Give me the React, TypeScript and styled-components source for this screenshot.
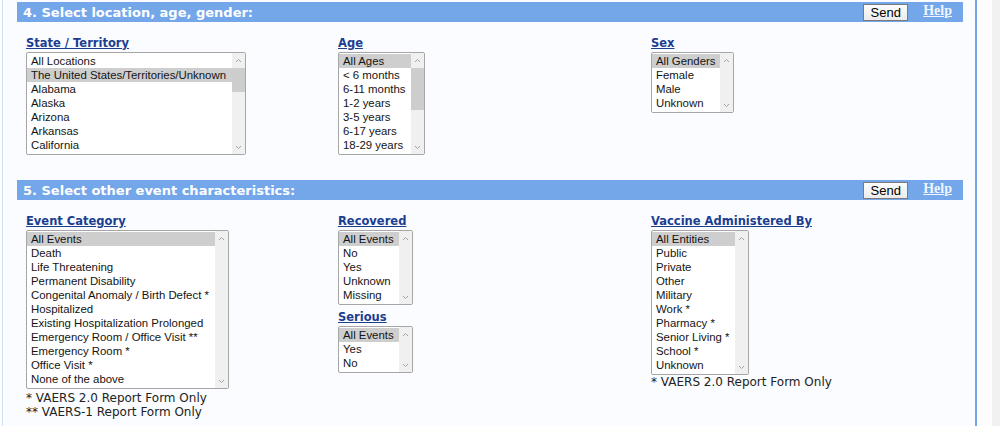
import React from 'react';
import styled, { createGlobalStyle } from 'styled-components';

const GlobalStyle = createGlobalStyle`
  html, body {
    margin: 0;
    padding: 0;
    background: #ffffff;
  }
  body {
    font-family: "Liberation Sans", Arial, sans-serif;
  }
`;

const Page = styled.div`
  display: flex;
  height: 426px;
  overflow: hidden;
`;

const Panel = styled.div`
  margin-left: 2px;
  width: 946px;
  padding: 2px 12px 0 14px;
  border-left: 1px solid #cfe0f7;
  border-right: 2px solid #74a6ea;
  background: #fafcff;
`;

const Gap = styled.div`
  flex: 1;
  background: #fdfdfd;
`;

const Gutter = styled.div`
  width: 8px;
  background: #f1f1f1;
`;

const Section = styled.section`
  & + & {
    margin-top: 25px;
  }
`;

const Bar = styled.div`
  display: flex;
  align-items: center;
  height: 20px;
  padding: 0 11px 0 6px;
  background: #74a6ea;
`;

const BarTitle = styled.h2`
  flex: 1;
  margin: 0;
  font: bold 13px "DejaVu Sans", Verdana, sans-serif;
  color: #ffffff;
`;

const SendButton = styled.button`
  width: 45px;
  height: 17px;
  margin-right: 15px;
  padding: 0;
  font: 13px "Liberation Sans", Arial, sans-serif;
  color: #000;
  background: linear-gradient(#fdfdfd, #ebebeb);
  border: 1px solid #7a7a7a;
  border-radius: 0;
`;

const HelpLink = styled.a`
  margin-top: -3px;
  font: bold 14px "Liberation Serif", Georgia, serif;
  color: #f0f5ff;
  text-decoration: underline;
`;

const Fields = styled.div`
  display: grid;
  grid-template-columns: 312px 313px 1fr;
  align-items: start;
  padding: 13px 0 0 9px;
`;

const Field = styled.div`
  display: flex;
  flex-direction: column;
  align-items: flex-start;
`;

const FieldLabel = styled.a<{ $gap?: number }>`
  display: inline-block;
  height: 16px;
  margin: ${(p) => p.$gap || 0}px 0 1px;
  font: bold 11.5px/16px "DejaVu Sans", Verdana, sans-serif;
  color: #1b3e91;
  text-decoration: underline;
`;

const Box = styled.div<{ $width: number }>`
  display: flex;
  box-sizing: border-box;
  width: ${(p) => p.$width}px;
  border: 1px solid #a6a6a6;
  border-radius: 2px;
  background: #ffffff;
`;

const Options = styled.ul<{ $rows: number }>`
  flex: 1;
  margin: 0;
  padding: 1px 0 2px;
  list-style: none;
  height: ${(p) => p.$rows * 14}px;
  overflow: hidden;
`;

const Option = styled.li<{ $selected?: boolean }>`
  height: 14px;
  padding-left: 4px;
  line-height: 14px;
  font-size: 11.4px;
  white-space: nowrap;
  color: #141414;
  background: ${(p) => (p.$selected ? '#cecece' : 'transparent')};
`;

const Scrollbar = styled.div`
  display: flex;
  flex-direction: column;
  width: 13px;
  background: #f0f0f0;
`;

const ArrowButton = styled.div`
  display: flex;
  align-items: center;
  justify-content: center;
  height: 14px;
`;

const Track = styled.div`
  flex: 1;
  padding-top: 1px;
`;

const Thumb = styled.div<{ $size: number }>`
  height: ${(p) => p.$size}px;
  background: #cdcdcd;
`;

const Notes = styled.div<{ $gap?: number }>`
  margin-top: ${(p) => p.$gap || 0}px;
`;

const Note = styled.p`
  margin: 0;
  font: 12px/14px "DejaVu Sans", Verdana, sans-serif;
  color: #222;
`;

const Chevron = ({ up }: { up?: boolean }) => (
  <svg width="7" height="5" viewBox="0 0 7 5">
    <polyline
      points={up ? '1,4 3.5,1.5 6,4' : '1,1 3.5,3.5 6,1'}
      fill="none"
      stroke="#a3a3a3"
      strokeWidth="1"
    />
  </svg>
);

type ListProps = {
  items: string[];
  selected: number;
  rows: number;
  width: number;
  thumb?: number;
};

const ListBox = ({ items, selected, rows, width, thumb }: ListProps) => (
  <Box $width={width}>
    <Options $rows={rows}>
      {items.slice(0, rows).map((it, i) => (
        <Option key={it} $selected={i === selected}>
          {it}
        </Option>
      ))}
    </Options>
    <Scrollbar>
      <ArrowButton>
        <Chevron up />
      </ArrowButton>
      <Track>{thumb ? <Thumb $size={thumb} /> : null}</Track>
      <ArrowButton>
        <Chevron />
      </ArrowButton>
    </Scrollbar>
  </Box>
);

const SectionBar = ({ title }: { title: string }) => (
  <Bar>
    <BarTitle>{title}</BarTitle>
    <SendButton type="button">Send</SendButton>
    <HelpLink href="#">Help</HelpLink>
  </Bar>
);

const states = [
  'All Locations',
  'The United States/Territories/Unknown',
  'Alabama',
  'Alaska',
  'Arizona',
  'Arkansas',
  'California',
  'Colorado',
  'Connecticut',
  'Delaware',
];

const ages = [
  'All Ages',
  '< 6 months',
  '6-11 months',
  '1-2 years',
  '3-5 years',
  '6-17 years',
  '18-29 years',
  '30-39 years',
  '40-49 years',
  '50-59 years',
  '60-64 years',
  '65-79 years',
  '80+ years',
  'Unknown',
];

const sexes = ['All Genders', 'Female', 'Male', 'Unknown'];

const events = [
  'All Events',
  'Death',
  'Life Threatening',
  'Permanent Disability',
  'Congenital Anomaly / Birth Defect *',
  'Hospitalized',
  'Existing Hospitalization Prolonged',
  'Emergency Room / Office Visit **',
  'Emergency Room *',
  'Office Visit *',
  'None of the above',
];

const recovered = ['All Events', 'No', 'Yes', 'Unknown', 'Missing'];
const serious = ['All Events', 'Yes', 'No'];

const administered = [
  'All Entities',
  'Public',
  'Private',
  'Other',
  'Military',
  'Work *',
  'Pharmacy *',
  'Senior Living *',
  'School *',
  'Unknown',
];

export default function App() {
  return (
    <>
      <GlobalStyle />
      <Page>
        <Panel>
          <Section>
            <SectionBar title="4. Select location, age, gender:" />
            <Fields>
              <Field>
                <FieldLabel href="#">State / Territory</FieldLabel>
                <ListBox items={states} selected={1} rows={7} width={220} thumb={24} />
              </Field>
              <Field>
                <FieldLabel href="#">Age</FieldLabel>
                <ListBox items={ages} selected={0} rows={7} width={87} thumb={42} />
              </Field>
              <Field>
                <FieldLabel href="#">Sex</FieldLabel>
                <ListBox items={sexes} selected={0} rows={4} width={83} />
              </Field>
            </Fields>
          </Section>

          <Section>
            <SectionBar title="5. Select other event characteristics:" />
            <Fields>
              <Field>
                <FieldLabel href="#">Event Category</FieldLabel>
                <ListBox items={events} selected={0} rows={11} width={203} />
                <Notes $gap={2}>
                  <Note>* VAERS 2.0 Report Form Only</Note>
                  <Note>** VAERS-1 Report Form Only</Note>
                </Notes>
              </Field>
              <Field>
                <FieldLabel href="#">Recovered</FieldLabel>
                <ListBox items={recovered} selected={0} rows={5} width={75} />
                <FieldLabel href="#" $gap={4}>
                  Serious
                </FieldLabel>
                <ListBox items={serious} selected={0} rows={3} width={75} />
              </Field>
              <Field>
                <FieldLabel href="#">Vaccine Administered By</FieldLabel>
                <ListBox items={administered} selected={0} rows={10} width={98} />
                <Notes>
                  <Note>* VAERS 2.0 Report Form Only</Note>
                </Notes>
              </Field>
            </Fields>
          </Section>
        </Panel>
        <Gap />
        <Gutter />
      </Page>
    </>
  );
}
